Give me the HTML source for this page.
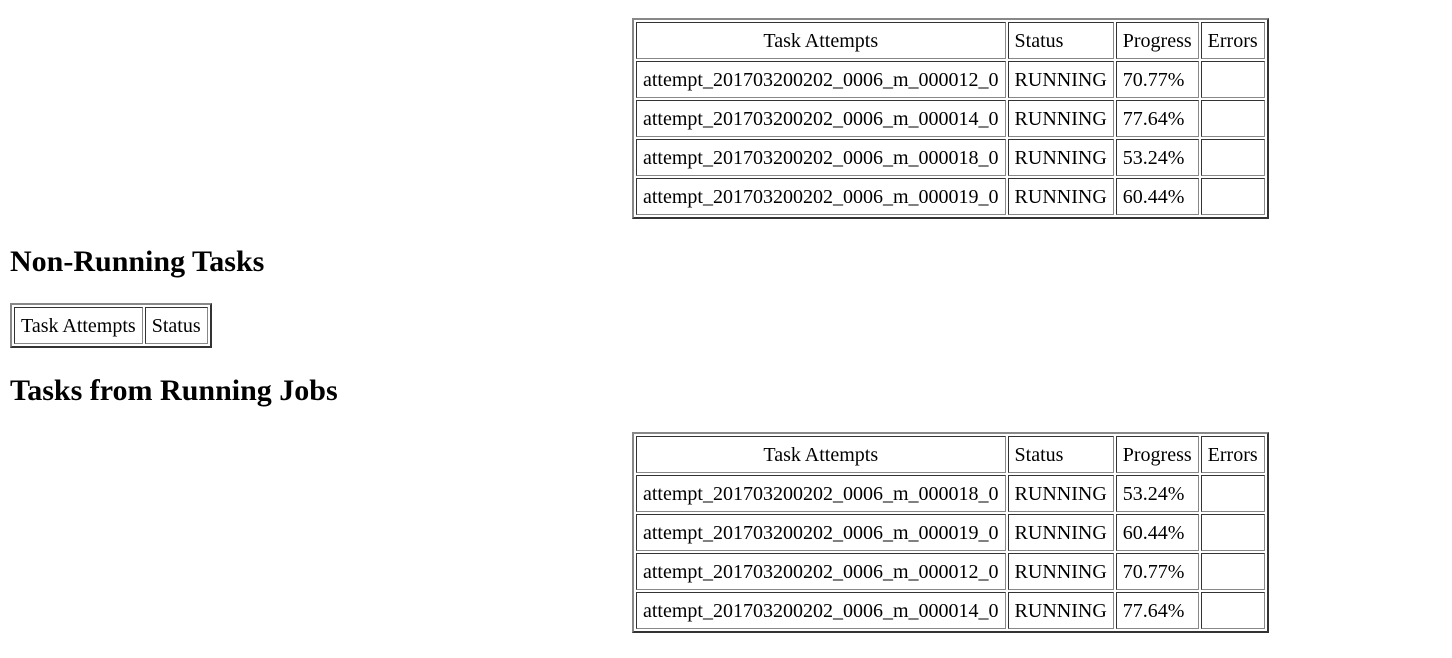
<!DOCTYPE html>
<html><head><meta charset="utf-8"><style>
body{margin:0;background:#fff;font-family:"Liberation Serif",serif;color:#000}
table{position:absolute;border-collapse:separate;border-spacing:2px;border:2px solid;border-color:#888 #333 #333 #888;font-size:20px}
td{border:1px solid;border-color:#333 #888 #888 #333;padding:7px 6px 5px;line-height:23px;white-space:nowrap}
h2{position:absolute;left:10px;margin:0;font-size:30px;font-weight:bold;line-height:34px}
.c{text-align:center}
</style></head><body>
<table style="left:632px;top:18px">
<tr><td class="c" style="width:355px">Task Attempts</td><td style="width:92px">Status</td><td style="width:68px">Progress</td><td style="width:50px">Errors</td></tr>
<tr><td>attempt_201703200202_0006_m_000012_0</td><td>RUNNING</td><td>70.77%</td><td></td></tr>
<tr><td>attempt_201703200202_0006_m_000014_0</td><td>RUNNING</td><td>77.64%</td><td></td></tr>
<tr><td>attempt_201703200202_0006_m_000018_0</td><td>RUNNING</td><td>53.24%</td><td></td></tr>
<tr><td>attempt_201703200202_0006_m_000019_0</td><td>RUNNING</td><td>60.44%</td><td></td></tr>
</table>
<h2 style="top:245px">Non-Running Tasks</h2>
<table style="left:10px;top:303px">
<tr><td>Task Attempts</td><td>Status</td></tr>
</table>
<h2 style="top:374px">Tasks from Running Jobs</h2>
<table style="left:632px;top:432px">
<tr><td class="c" style="width:355px">Task Attempts</td><td style="width:92px">Status</td><td style="width:68px">Progress</td><td style="width:50px">Errors</td></tr>
<tr><td>attempt_201703200202_0006_m_000018_0</td><td>RUNNING</td><td>53.24%</td><td></td></tr>
<tr><td>attempt_201703200202_0006_m_000019_0</td><td>RUNNING</td><td>60.44%</td><td></td></tr>
<tr><td>attempt_201703200202_0006_m_000012_0</td><td>RUNNING</td><td>70.77%</td><td></td></tr>
<tr><td>attempt_201703200202_0006_m_000014_0</td><td>RUNNING</td><td>77.64%</td><td></td></tr>
</table>
</body></html>
